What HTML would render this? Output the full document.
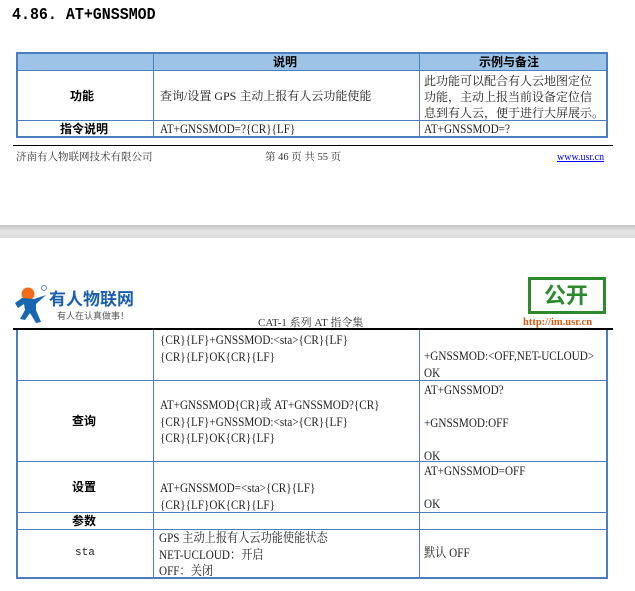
<!DOCTYPE html>
<html><head><meta charset="utf-8"><style>
*{margin:0;padding:0;box-sizing:border-box}
body{width:635px;height:591px;background:#fff;position:relative;overflow:hidden;font-family:"Liberation Serif","Noto Serif CJK SC",serif;font-size:11.5px;color:#222}
.a{position:absolute;white-space:nowrap;line-height:14px}
.b{font-family:"Liberation Sans","Noto Sans CJK SC",sans-serif;font-weight:bold;color:#000}
.h{position:absolute;background:#4a7ec0}
.t{transform:scaleX(0.86);transform-origin:left;font-size:13px}
</style></head><body>
<div class="a b" style="left:12px;top:6px;font-size:17px;line-height:20px;font-family:'Liberation Mono','Noto Sans CJK SC',monospace;transform:scaleX(0.88);transform-origin:left">4.86. AT+GNSSMOD</div>

<!-- table 1 -->
<div style="position:absolute;left:16px;top:53px;width:592px;height:17px;background:#9dc3e6"></div>
<div class="h" style="left:16px;top:52px;width:592px;height:2px"></div>
<div class="h" style="left:16px;top:70px;width:592px;height:1px"></div>
<div class="h" style="left:16px;top:120px;width:592px;height:1px"></div>
<div class="h" style="left:16px;top:136px;width:592px;height:2px"></div>
<div class="h" style="left:16px;top:52px;width:2px;height:86px"></div>
<div class="h" style="left:153px;top:52px;width:1px;height:86px"></div>
<div class="h" style="left:419px;top:52px;width:1px;height:86px"></div>
<div class="h" style="left:606px;top:52px;width:2px;height:86px"></div>
<div class="a b" style="left:273px;top:55px;font-size:12px">说明</div>
<div class="a b" style="left:479px;top:55px;font-size:12px">示例与备注</div>
<div class="a b" style="left:70px;top:89px;font-size:12px">功能</div>
<div class="a" style="left:160px;top:89px;font-size:12px">查询/设置 GPS 主动上报有人云功能使能</div>
<div class="a" style="left:424px;top:73px;font-size:12px;line-height:16px">此功能可以配合有人云地图定位<br>功能，主动上报当前设备定位信<br>息到有人云，便于进行大屏展示。</div>
<div class="a b" style="left:60px;top:122px;font-size:12px">指令说明</div>
<div class="a t" style="left:160px;top:122px">AT+GNSSMOD=?{CR}{LF}</div>
<div class="a t" style="left:424px;top:122px">AT+GNSSMOD=?</div>

<div style="position:absolute;left:13px;top:145px;width:600px;height:1px;background:#000"></div>
<div class="a" style="left:16px;top:151px;font-size:10.5px;color:#333">济南有人物联网技术有限公司</div>
<div class="a" style="left:265px;top:151px;font-size:10.5px;color:#333">第 46 页 共 55 页</div>
<div class="a" style="left:557px;top:151px;font-size:10px;color:#00f;text-decoration:underline">www.usr.cn</div>

<div style="position:absolute;left:0;top:225px;width:635px;height:13px;background:linear-gradient(#c4c4c4,#e6e6e6 50%,#dadada)"></div>

<!-- page 2 header -->
<svg style="position:absolute;left:12px;top:284px" width="38" height="42" viewBox="0 0 38 42">
<circle cx="16" cy="10" r="6.5" fill="#f26a1b"/>
<circle cx="32" cy="4" r="2.5" fill="none" stroke="#2a6db5" stroke-width="0.8"/>
<path d="M3 19 L10 14 L22 15 L34 11 L24 20 L24 26 L29 38 L24 39 L18 29 L13 36 L8 35 L13 26 L12 20 L6 24 Z" fill="#1666b0"/>
</svg>
<div class="a b" style="left:49px;top:290px;font-size:17px;line-height:20px;color:#1a5fae">有人物联网</div>
<div class="a" style="left:57px;top:311px;font-size:9px;line-height:11px;color:#555;font-family:'Liberation Sans','Noto Sans CJK SC',sans-serif">有人在认真做事！</div>
<div class="a" style="left:258px;top:316px;font-size:11px;color:#333">CAT-1 系列 AT 指令集</div>
<div style="position:absolute;left:528px;top:277px;width:78px;height:37px;border:3px solid #2c8a2c"></div>
<div class="a b" style="left:544px;top:282px;font-size:22px;line-height:27px;color:#2c8a2c">公开</div>
<div class="a" style="left:523px;top:316px;font-size:10.5px;font-weight:bold;color:#d05a10">http://im.usr.cn</div>
<div style="position:absolute;left:13px;top:328px;width:600px;height:2px;background:#000"></div>

<!-- table 2 -->
<div class="h" style="left:16px;top:380px;width:592px;height:1px"></div>
<div class="h" style="left:16px;top:461px;width:592px;height:1px"></div>
<div class="h" style="left:16px;top:512px;width:592px;height:1px"></div>
<div class="h" style="left:16px;top:529px;width:592px;height:1px"></div>
<div class="h" style="left:16px;top:577px;width:592px;height:2px"></div>
<div class="h" style="left:16px;top:330px;width:2px;height:249px"></div>
<div class="h" style="left:153px;top:330px;width:1px;height:249px"></div>
<div class="h" style="left:419px;top:330px;width:1px;height:249px"></div>
<div class="h" style="left:606px;top:330px;width:2px;height:249px"></div>

<div class="a t" style="left:160px;top:332px;line-height:16.5px">{CR}{LF}+GNSSMOD:&lt;sta&gt;{CR}{LF}<br>{CR}{LF}OK{CR}{LF}</div>
<div class="a t" style="left:424px;top:348px;line-height:16.5px">+GNSSMOD:&lt;OFF,NET-UCLOUD&gt;<br>OK</div>

<div class="a b" style="left:72px;top:414px;font-size:12px">查询</div>
<div class="a t" style="left:160px;top:397px;line-height:16.5px">AT+GNSSMOD{CR}或 AT+GNSSMOD?{CR}<br>{CR}{LF}+GNSSMOD:&lt;sta&gt;{CR}{LF}<br>{CR}{LF}OK{CR}{LF}</div>
<div class="a t" style="left:424px;top:382px;line-height:16.5px">AT+GNSSMOD?<br><br>+GNSSMOD:OFF<br><br>OK</div>

<div class="a b" style="left:72px;top:480px;font-size:12px">设置</div>
<div class="a t" style="left:160px;top:480px;line-height:16.5px">AT+GNSSMOD=&lt;sta&gt;{CR}{LF}<br>{CR}{LF}OK{CR}{LF}</div>
<div class="a t" style="left:424px;top:463px;line-height:16.5px">AT+GNSSMOD=OFF<br><br>OK</div>

<div class="a b" style="left:72px;top:514px;font-size:12px">参数</div>

<div class="a" style="left:75px;top:546px;font-family:'Liberation Mono',monospace;font-size:11px">sta</div>
<div class="a t" style="left:159px;top:530px;line-height:16.5px">GPS 主动上报有人云功能使能状态<br>NET-UCLOUD：开启<br>OFF：关闭</div>
<div class="a t" style="left:424px;top:546px">默认 OFF</div>
</body></html>
